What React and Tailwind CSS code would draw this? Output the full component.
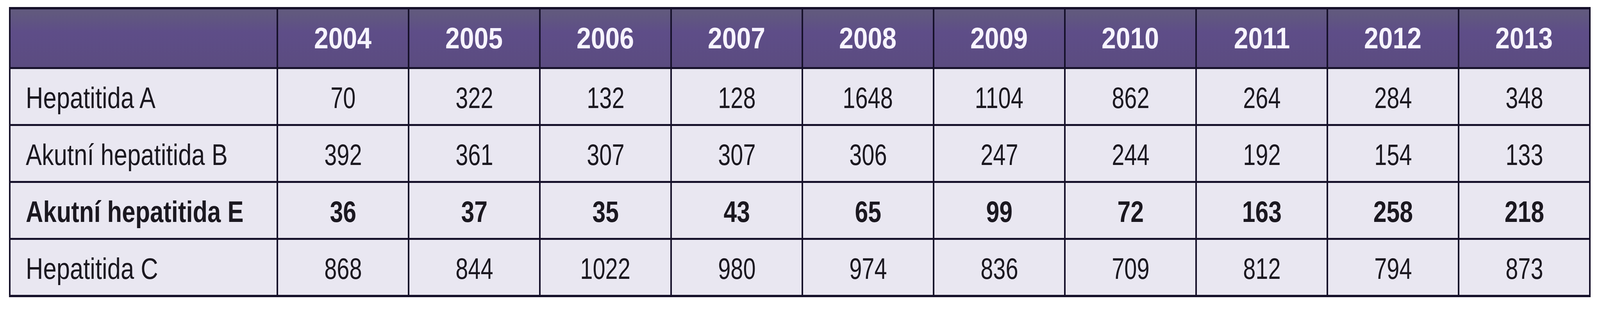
const years = ["2004", "2005", "2006", "2007", "2008", "2009", "2010", "2011", "2012", "2013"];

const rows = [
  { label: "Hepatitida A", values: [70, 322, 132, 128, 1648, 1104, 862, 264, 284, 348] },
  { label: "Akutní hepatitida B", values: [392, 361, 307, 307, 306, 247, 244, 192, 154, 133] },
  { label: "Akutní hepatitida E", values: [36, 37, 35, 43, 65, 99, 72, 163, 258, 218], bold: true },
  { label: "Hepatitida C", values: [868, 844, 1022, 980, 974, 836, 709, 812, 794, 873] },
];

const headCell = "min-w-0 h-[148px] bg-linear-to-b from-[#61597e] from-[6%] via-[#5e4d88] via-[40%] to-[#5b4c80]";

// the source table uses a narrow DIN-like face, so text is squeezed horizontally
const App = () => {
  return (
    <div
      className="w-full h-[800px] bg-white pt-[18px] pl-[23px]"
      style={{ fontFamily: '"Liberation Sans", Arial, sans-serif' }}
    >
      <div className="w-[4049px] bg-[#16112a] pt-[6px] pb-[6px] px-[4px] grid grid-cols-[681fr_repeat(10,332fr)] gap-x-[4px] gap-y-[5px]">
        {/* header */}
        <div className={headCell} />
        {years.map((y) => (
          <div
            key={y}
            className={`${headCell} flex items-center justify-center text-[76px] leading-none font-bold text-[#f7f4ff]`}
          >
            <span className="inline-block scale-x-[0.87]">{y}</span>
          </div>
        ))}

        {/* body */}
        {rows.map((row) => (
          <div key={row.label} className="contents">
            <div
              className={`min-w-0 h-[141px] bg-[#e9e7f1] flex items-center pt-[6px] pl-[39px] text-[76px] leading-none text-[#1b1820] whitespace-nowrap ${
                row.bold ? "font-bold" : ""
              }`}
            >
              <span className="inline-block origin-left scale-x-[0.81]">{row.label}</span>
            </div>
            {row.values.map((v, i) => (
              <div
                key={i}
                className={`min-w-0 h-[141px] bg-[#e9e7f1] flex items-center justify-center pt-[6px] text-[76px] leading-none text-[#1b1820] ${
                  row.bold ? "font-bold" : ""
                }`}
              >
                <span className={`inline-block ${row.bold ? "scale-x-[0.8]" : "scale-x-[0.76]"}`}>{v}</span>
              </div>
            ))}
          </div>
        ))}
      </div>
    </div>
  );
};

export default App;
